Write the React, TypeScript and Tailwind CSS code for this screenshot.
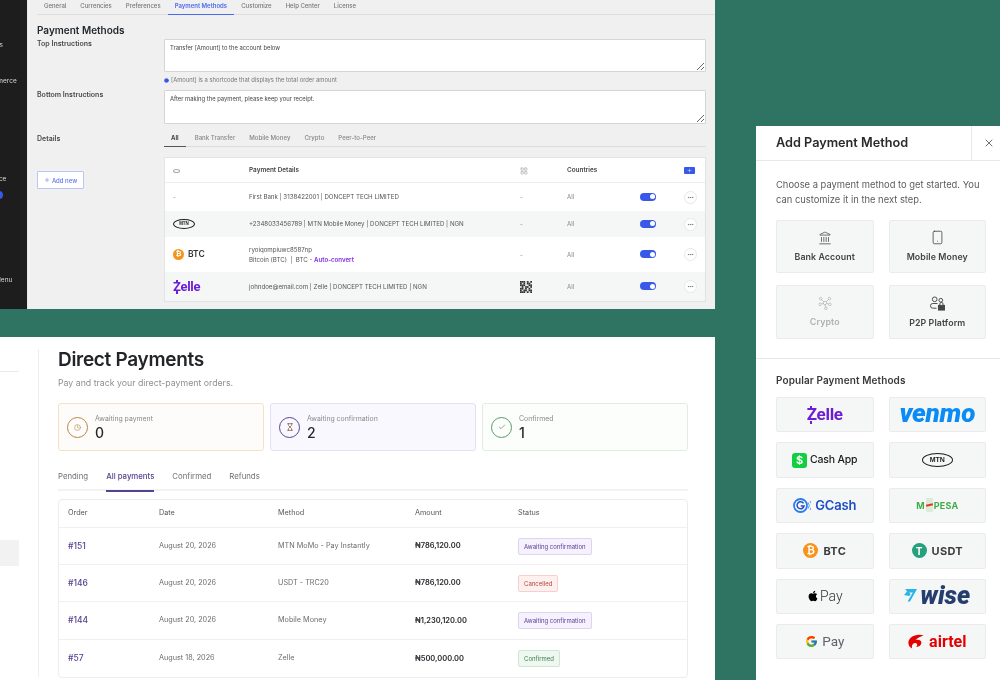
import React from "react";
import { Landmark, Smartphone, X, Plus, MoreHorizontal, Clock, Hourglass, Check, Info, LayoutGrid } from "lucide-react";
import { FaApple } from "react-icons/fa";
import { FcGoogle } from "react-icons/fc";

const inter = "font-['Inter','Liberation_Sans',sans-serif]";

function ZelleLogo({ size }: { size: "sm" | "md" }) {
  const text = size === "sm" ? "text-[13px]" : "text-[17px]";
  return (
    <span className={`relative inline-block font-['Roboto',sans-serif] font-bold leading-none tracking-[-0.3px] text-[#6d1ed4] ${text}`}>
      Zelle
      <span className="absolute left-[3px] top-[-0.5px] h-[2.5px] w-[2px] bg-[#6d1ed4]" />
      <span className="absolute bottom-[-0.5px] left-[3px] h-[2.5px] w-[2px] bg-[#6d1ed4]" />
    </span>
  );
}

function MtnLogo({ w, h, t }: { w: string; h: string; t: string }) {
  return (
    <span className={`flex items-center justify-center rounded-[50%] border border-[#1c1c1c] font-['Liberation_Sans',sans-serif] font-bold text-[#1c1c1c] ${w} ${h} ${t}`}>
      MTN
    </span>
  );
}

function BtcCoin({ cls, t }: { cls: string; t: string }) {
  return (
    <span className={`flex items-center justify-center rounded-full bg-[#f7931a] font-['DejaVu_Sans',sans-serif] font-bold leading-none text-white ${cls} ${t}`}>₿</span>
  );
}

function Toggle() {
  return (
    <span className="-mt-[1px] flex h-[8px] w-[16px] items-center justify-end rounded-full bg-[#3858e9] pr-[1.5px]">
      <span className="h-[5px] w-[5px] rounded-full bg-white" />
    </span>
  );
}

function QrImage() {
  const cells = [
    "1110101", "1010110", "1110011", "0101101", "1101010", "1011011", "1110101",
  ];
  return (
    <svg width="12" height="12" viewBox="0 0 7 7" className="bg-[#e9e9e9]">
      {cells.flatMap((row, y) =>
        row.split("").map((c, x) => (c === "1" ? <rect key={`${x}-${y}`} x={x} y={y} width="1" height="1" fill="#333" /> : null))
      )}
    </svg>
  );
}

const detailRows: { h: string; zebra: boolean; logo: React.ReactNode; detail: React.ReactNode; qr: React.ReactNode }[] = [
  { h: "h-[28px]", zebra: false, logo: <span className="text-[#888]">-</span>, detail: "First Bank | 3138422001 | DONCEPT TECH LIMITED", qr: "-" },
  { h: "h-[26px]", zebra: true, logo: <MtnLogo w="w-[22px]" h="h-[10px]" t="text-[4.5px]" />, detail: "+2348033456789 | MTN Mobile Money | DONCEPT TECH LIMITED | NGN", qr: "-" },
  {
    h: "h-[35px]",
    zebra: false,
    logo: (
      <span className="flex items-center gap-[4px]">
        <BtcCoin cls="h-[11px] w-[11px]" t="text-[7px]" />
        <span className="text-[8.5px] font-semibold text-[#333]">BTC</span>
      </span>
    ),
    detail: (
      <span className="flex flex-col gap-[2px] leading-[8px]">
        <span>ryoiqompiuwc8587np</span>
        <span>
          Bitcoin (BTC) &nbsp;|&nbsp; BTC - <span className="font-semibold text-[#7c2ee6]">Auto-convert</span>
        </span>
      </span>
    ),
    qr: "-",
  },
  { h: "h-[29px]", zebra: true, logo: <ZelleLogo size="sm" />, detail: "johndoe@email.com | Zelle | DONCEPT TECH LIMITED | NGN", qr: <QrImage /> },
];

const gridCols = "grid grid-cols-[76px_271px_47px_73px_44px_21px] items-center";

function SettingsPanel() {
  const tabs = ["General", "Currencies", "Preferences", "Payment Methods", "Customize", "Help Center", "License"];
  const sub = ["Bank Transfer", "Mobile Money", "Crypto", "Peer-to-Peer"];
  return (
    <section className={`absolute left-0 top-0 flex h-[309px] w-[715px] overflow-hidden bg-[#f0f0f0] ${inter}`}>
      <aside className="flex w-[27px] shrink-0 flex-col overflow-hidden bg-[#1d1d1d] text-[6.5px] leading-[8px] text-[#d8d8d8]">
        <span className="mt-[41px] -ml-[18px] whitespace-nowrap">Orders</span>
        <span className="mt-[28px] -ml-[17px] whitespace-nowrap">Commerce</span>
        <span className="mt-[90px] -ml-[31px] whitespace-nowrap">Appearance</span>
        <span className="mt-[8px] -ml-[5px] h-[8px] w-[8px] rounded-full bg-[#3858e9]" />
        <span className="mt-[77px] -ml-[5px] whitespace-nowrap">Menu</span>
      </aside>
      <div className="flex min-w-0 flex-1 flex-col border-l border-[#e6e6e6] pl-[9px]">
        <nav className="flex h-[15px] shrink-0 items-start border-b border-[#dedede] pt-[2px] text-[6px] font-medium leading-[7px] text-[#777]">
          {tabs.map((t) =>
            t === "Payment Methods" ? (
              <span key={t} className="-mb-[1px] -mt-[2px] h-[15px] border-b border-[#4c6af0] px-[7px] pt-[2px] font-semibold text-[#4c6af0]">{t}</span>
            ) : (
              <span key={t} className="px-[7px]">{t}</span>
            )
          )}
        </nav>
        <div className="flex flex-col pr-[9px]">
          <h2 className="mt-[8px] text-[10px] font-semibold leading-[15px] text-[#23282d]">Payment Methods</h2>
          <div className="mt-[1px] grid grid-cols-[127px_minmax(0,1fr)] text-[6.5px]">
            <span className="pt-[1px] text-[7px] font-semibold leading-[8px] text-[#4a4a4a]">Top Instructions</span>
            <div className="flex min-w-0 flex-col">
              <textarea readOnly defaultValue="Transfer [Amount] to the account below" className="block h-[33px] w-full rounded-[1px] border border-[#d5d5d5] bg-white px-[5px] py-[3px] text-[5.85px] leading-[9px] text-[#444] outline-none" />
              <p className="mt-[4px] flex h-[8px] items-center gap-[2px] text-[5.85px] leading-[8px] text-[#777]">
                <Info size={5} className="text-[#3858e9]" fill="#3858e9" /> [Amount] is a shortcode that displays the total order amount
              </p>
            </div>
            <span className="mt-[7px] text-[7px] font-semibold leading-[8px] text-[#4a4a4a]">Bottom Instructions</span>
            <textarea readOnly defaultValue="After making the payment, please keep your receipt." className="mt-[6px] block h-[34px] w-full rounded-[1px] border border-[#d5d5d5] bg-white px-[5px] py-[3px] text-[5.85px] leading-[9px] text-[#444] outline-none" />
            <div className="mt-[10px] flex flex-col items-start">
              <span className="mt-[1px] text-[7px] font-semibold leading-[8px] text-[#4a4a4a]">Details</span>
              <button className="mt-[28px] flex h-[18px] w-[47px] items-center justify-center gap-[2px] rounded-[1px] border border-[#bac6f6] bg-white text-[6px] font-medium text-[#5a76ee]">
                <Plus size={6} /> Add new
              </button>
            </div>
            <div className="mt-[9px] flex min-w-0 flex-col">
              <div className="flex h-[14px] items-start border-b border-[#dcdcdc] pt-[1px] text-[6.1px] font-medium leading-[8px] text-[#888]">
                <span className="-mb-[1px] -mt-[1px] mr-[2px] h-[14px] border-b border-[#555] px-[7px] pt-[1px] font-semibold text-[#333]">All</span>
                {sub.map((s) => (
                  <span key={s} className="px-[7px]">{s}</span>
                ))}
              </div>
              <div className="mt-[10px] flex flex-col border border-[#e3e3e3] bg-white text-[6.15px] text-[#555]">
                <div className={`${gridCols} h-[25px] border-b border-[#ededed] pl-[8px] pt-[1px] text-[6.4px] font-semibold text-[#444]`}>
                  <span className="h-[4px] w-[7px] rounded-[50%] border border-[#aaa]" />
                  <span>Payment Details</span>
                  <LayoutGrid size={8} className="text-[#aaa]" />
                  <span>Countries</span>
                  <span />
                  <span className="flex h-[7px] w-[11px] items-center justify-center rounded-[1px] bg-[#3858e9] text-white"><Plus size={5} /></span>
                </div>
                {detailRows.map((r, i) => (
                  <div key={i} className={`${gridCols} ${r.h} pl-[8px] ${r.zebra ? "bg-[#f5f6f6]" : "bg-white"}`}>
                    <span className="flex items-center">{r.logo}</span>
                    <span>{r.detail}</span>
                    <span className="text-[#888]">{r.qr}</span>
                    <span className="text-[#888]">All</span>
                    <Toggle />
                    <span className="flex h-[13px] w-[13px] items-center justify-center rounded-full border border-[#e8e8e8] bg-white text-[#666]"><MoreHorizontal size={7} /></span>
                  </div>
                ))}
              </div>
            </div>
          </div>
        </div>
      </div>
    </section>
  );
}

function StatCard({ border, bg, ring, icon, label, value }: { border: string; bg: string; ring: string; icon: React.ReactNode; label: string; value: string }) {
  return (
    <div className={`flex h-[48px] items-center gap-[7px] rounded-[3px] border pl-[8px] ${border} ${bg}`}>
      <span className={`flex h-[21px] w-[21px] items-center justify-center rounded-full border-[1.5px] ${ring}`}>{icon}</span>
      <span className="flex flex-col">
        <span className="text-[6.9px] leading-[9px] text-[#8a8a8a]">{label}</span>
        <span className="mt-[2px] text-[14px] font-medium leading-[15px] text-[#25272b]">{value}</span>
      </span>
    </div>
  );
}

const awaiting = "border-[#ddd3f3] bg-[#f5f1fd] text-[#5b3f96]";
const orders = [
  { id: "#151", date: "August 20, 2026", method: "MTN MoMo - Pay Instantly", amount: "₦786,120.00", status: "Awaiting confirmation", cls: awaiting, h: "h-[37px]" },
  { id: "#146", date: "August 20, 2026", method: "USDT - TRC20", amount: "₦786,120.00", status: "Cancelled", cls: "border-[#f6d0cc] bg-[#fdf0ee] text-[#b3443a]", h: "h-[37px]" },
  { id: "#144", date: "August 20, 2026", method: "Mobile Money", amount: "₦1,230,120.00", status: "Awaiting confirmation", cls: awaiting, h: "h-[38px]" },
  { id: "#57", date: "August 18, 2026", method: "Zelle", amount: "₦500,000.00", status: "Confirmed", cls: "border-[#cfe6d2] bg-[#eff8f0] text-[#3f7d4d]", h: "h-[37px]" },
];
const orderCols = "grid grid-cols-[91px_119px_137px_103px_1fr] items-center pl-[9px]";

function OrdersPanel() {
  return (
    <section className={`absolute left-0 top-[337px] flex h-[343px] w-[715px] overflow-hidden bg-white ${inter}`}>
      <aside className="mt-[12px] flex h-[328px] w-[39px] shrink-0 flex-col border-r border-[#efefef]">
        <span className="mt-[22px] h-px w-[19px] bg-[#eaeaea]" />
        <span className="mt-[168px] h-[26px] w-[19px] bg-[#f2f2f2]" />
      </aside>
      <div className="flex min-w-0 flex-1 flex-col pl-[19px] pr-[27px]">
        <h1 className="mt-[9px] text-[19px] font-semibold leading-[28px] tracking-[-0.3px] text-[#222428]">Direct Payments</h1>
        <p className="mt-[3px] text-[8.75px] leading-[12px] text-[#8c8e92]">Pay and track your direct-payment orders.</p>
        <div className="mt-[14px] grid grid-cols-3 gap-[6px]">
          <StatCard border="border-[#f5e2c6]" bg="bg-[#fefcfa]" ring="border-[#b78545] text-[#b78545]" icon={<Clock size={7} />} label="Awaiting payment" value="0" />
          <StatCard border="border-[#e5e0f7]" bg="bg-[#faf8ff]" ring="border-[#5a4394] text-[#6b4a3a]" icon={<Hourglass size={8} />} label="Awaiting confirmation" value="2" />
          <StatCard border="border-[#dfeee1]" bg="bg-[#fbfefb]" ring="border-[#5c9a6a] text-[#4d8a5b]" icon={<Check size={8} />} label="Confirmed" value="1" />
        </div>
        <div className="mt-[18px] flex h-[22px] gap-[18px] border-b-2 border-[#f2f2f2] pt-[1px] text-[7.8px] leading-[12px] text-[#6f7176]">
          <span>Pending</span>
          <span className="-mb-[2px] h-[22px] border-b-2 border-[#56418f] font-medium text-[#56418f]">All payments</span>
          <span>Confirmed</span>
          <span>Refunds</span>
        </div>
        <div className="mt-[8px] flex flex-col rounded-[4px] border border-[#ececec] text-[7.25px] text-[#6b6d72]">
          <div className={`${orderCols} h-[28px] border-b border-[#f0f0f0] text-[#55575b]`}>
            <span>Order</span><span>Date</span><span>Method</span><span>Amount</span><span>Status</span>
          </div>
          {orders.map((o, i) => (
            <div key={o.id} className={`${orderCols} ${o.h} ${i < 3 ? "border-b border-[#f0f0f0]" : ""}`}>
              <span className="text-[8.5px] font-medium text-[#56418f]">{o.id}</span>
              <span>{o.date}</span>
              <span>{o.method}</span>
              <span className="text-[7.5px] font-semibold text-[#26282c]">{o.amount}</span>
              <span className="flex">
                <span className={`flex h-[17px] items-center rounded-[2px] border px-[5px] text-[6px] ${o.cls}`}>{o.status}</span>
              </span>
            </div>
          ))}
        </div>
      </div>
    </section>
  );
}

function CryptoIcon() {
  return (
    <svg width="14" height="14" viewBox="0 0 16 16" fill="none" stroke="#bbbbbb" strokeWidth="1">
      <circle cx="8" cy="8" r="2" />
      <circle cx="3" cy="3" r="1.5" />
      <circle cx="13" cy="3" r="1.5" />
      <circle cx="2.5" cy="9.5" r="1.5" />
      <circle cx="13.5" cy="9.5" r="1.5" />
      <circle cx="9" cy="14" r="1.5" />
      <path d="M4 4l2.5 2.5M12 4L9.5 6.5M4 9l2-.5M12 9l-2-.5M8.5 12.5L8 10" />
    </svg>
  );
}

function P2PIcon() {
  return (
    <svg width="15" height="15" viewBox="0 0 16 16" fill="none" stroke="#444" strokeWidth="1">
      <circle cx="5" cy="3.5" r="2.5" />
      <circle cx="11.5" cy="4.5" r="2" />
      <path d="M7 13H3a2.500 2.500 0 0 1 0-5h5" />
      <rect x="9" y="10" width="6.500" height="5" fill="#444" />
      <path d="M10.500 10V8.500a1.700 1.700 0 0 1 3.400 0V10" />
    </svg>
  );
}

function WiseFlag() {
  return (
    <svg width="13" height="15" viewBox="0 0 13 15" className="-mt-[3px]">
      <path d="M0 8l3-3.500L1.200 2H13L6 14.500H3.600L8.800 5.500H5.400L6.600 7.500 5 9z" fill="#2ab5e8" />
    </svg>
  );
}

function AirtelMark() {
  return (
    <svg width="16" height="15" viewBox="0 0 16 15">
      <path d="M15.500 1.500C12 .2 6.500.6 3 3.600.5 5.700-.3 8.800 1 11.500c.6 1.400 2 2.600 3.300 2.900-.7-1.400-.6-3 .6-4.300 1.700-1.800 4.200-1 4.300.7.1 1-.7 1.700-1.800 1.900 3 .5 6-1.400 6-4 0-2.300-2.700-3.400-5.800-2.600C9 4.300 12 2.500 15.500 1.500z" fill="#e40000" />
    </svg>
  );
}

function GCashMark() {
  return (
    <svg width="18" height="15" viewBox="0 0 18 15" fill="none">
      <circle cx="7.500" cy="7.500" r="6.500" stroke="#2a7cf0" strokeWidth="1.800" />
      <path d="M10.500 5.400A3.500 3.500 0 1 0 11 8H7.800" stroke="#1f4fc4" strokeWidth="1.500" />
      <path d="M15.200 4.500a5 5 0 0 1 0 6M17 3a7.500 7.500 0 0 1 0 9" stroke="#2a7cf0" strokeWidth=".8" />
    </svg>
  );
}

const logos: React.ReactNode[] = [
  <ZelleLogo size="md" />,
  <span className="-mt-[3px] font-['Roboto',sans-serif] text-[26px] font-black italic leading-none tracking-[-0.2px] text-[#0a8bf5]">venmo</span>,
  <span className="flex items-center gap-[3px]">
    <span className="flex h-[15px] w-[15px] items-center justify-center rounded-[3px] bg-[#10d03f] text-[11px] font-bold text-white">$</span>
    <span className="text-[10.5px] font-medium tracking-[-0.2px] text-[#1a1a1a]">Cash App</span>
  </span>,
  <MtnLogo w="w-[31px]" h="h-[14px]" t="text-[7px]" />,
  <span className="flex items-center gap-[4px]">
    <GCashMark />
    <span className="text-[13px] font-semibold tracking-[-0.2px] text-[#1f4fc4]">GCash</span>
  </span>,
  <span className="flex items-center text-[9px] font-bold tracking-[0.2px] text-[#3fae49]">
    M
    <span className="relative mx-[1px] flex h-[14px] w-[7px] items-center rounded-[1px] bg-[#dcebd8]">
      <span className="h-[2px] w-[7px] -rotate-12 bg-[#e53525]" />
    </span>
    PESA
  </span>,
  <span className="flex items-center gap-[5px]">
    <BtcCoin cls="h-[15px] w-[15px]" t="text-[10px]" />
    <span className="text-[11px] font-bold tracking-[0.3px] text-[#3c3c3c]">BTC</span>
  </span>,
  <span className="flex items-center gap-[5px]">
    <span className="flex h-[15px] w-[15px] items-center justify-center rounded-full bg-[#26a17b] text-[10px] font-bold leading-none text-white">T</span>
    <span className="text-[11px] font-bold tracking-[0.3px] text-[#3c3c3c]">USDT</span>
  </span>,
  <span className="flex items-center gap-[1px]">
    <FaApple size={12} className="text-black" />
    <span className="font-['Roboto',sans-serif] text-[14px] font-light leading-none text-[#333]">Pay</span>
  </span>,
  <span className="flex items-center gap-[3px]">
    <WiseFlag />
    <span className="-mt-[2px] font-['Roboto',sans-serif] text-[25px] font-black italic leading-none text-[#243e6d]">wise</span>
  </span>,
  <span className="flex items-center gap-[4px]">
    <FcGoogle size={13} />
    <span className="font-['Roboto',sans-serif] text-[13.5px] leading-none text-[#5f6368]">Pay</span>
  </span>,
  <span className="flex items-center gap-[5px]">
    <AirtelMark />
    <span className="font-['Roboto',sans-serif] text-[16px] font-bold leading-none text-[#e40000]">airtel</span>
  </span>,
];

function AddPanel() {
  const cards = [
    { label: "Bank Account", icon: <Landmark size={14} strokeWidth={1.3} className="text-[#444]" />, muted: false },
    { label: "Mobile Money", icon: <Smartphone size={15} strokeWidth={1.3} className="text-[#444]" />, muted: false },
    { label: "Crypto", icon: <CryptoIcon />, muted: true },
    { label: "P2P Platform", icon: <P2PIcon />, muted: false },
  ];
  return (
    <section className={`absolute left-[756px] top-[126px] flex h-[554px] w-[244px] flex-col bg-white ${inter}`}>
      <header className="flex h-[35px] shrink-0 items-stretch border-b border-[#e8e8e8]">
        <h3 className="flex flex-1 items-center pl-[20px] text-[12.700px] font-semibold text-[#2a2a2a]">Add Payment Method</h3>
        <span className="flex w-[29px] items-center justify-center border-l border-[#e8e8e8] pl-[5px] text-[#333]"><X size={12} strokeWidth={1.4} /></span>
      </header>
      <div className="flex flex-col border-b border-[#e8e8e8] pb-[19.500px] pl-[20px] pr-[14px] pt-[16px]">
        <p className="text-[9.400px] leading-[15px] text-[#5c5c5c]">Choose a payment method to get started. You can customize it in the next step.</p>
        <div className="mt-[12.500px] grid grid-cols-2 gap-x-[15px] gap-y-[12px]">
          {cards.map((c) => (
            <div key={c.label} className="flex h-[53.500px] flex-col items-center justify-center gap-[6px] rounded-[2px] border border-[#ebebeb] bg-[#f5f6f6]">
              {c.icon}
              <span className={`text-[8.800px] font-semibold leading-[11px] tracking-[0.1px] ${c.muted ? "text-[#b0b0b0]" : "text-[#444]"}`}>{c.label}</span>
            </div>
          ))}
        </div>
      </div>
      <div className="flex flex-col pl-[20px] pr-[14px] pt-[15px]">
        <h4 className="text-[10px] font-semibold leading-[13px] tracking-[0.1px] text-[#3a3a3a]">Popular Payment Methods</h4>
        <div className="mt-[10px] grid grid-cols-2 gap-x-[15px] gap-y-[10px]">
          {logos.map((l, i) => (
            <div key={i} className="flex h-[35.400px] items-center justify-center overflow-hidden rounded-[2px] border border-[#ebebeb] bg-[#f5f6f6]">{l}</div>
          ))}
        </div>
      </div>
    </section>
  );
}

export default function App() {
  return (
    <main className="relative h-[680px] w-[1000px] overflow-hidden bg-[#2f7363] blur-[0.45px]">
      <SettingsPanel />
      <OrdersPanel />
      <AddPanel />
    </main>
  );
}
